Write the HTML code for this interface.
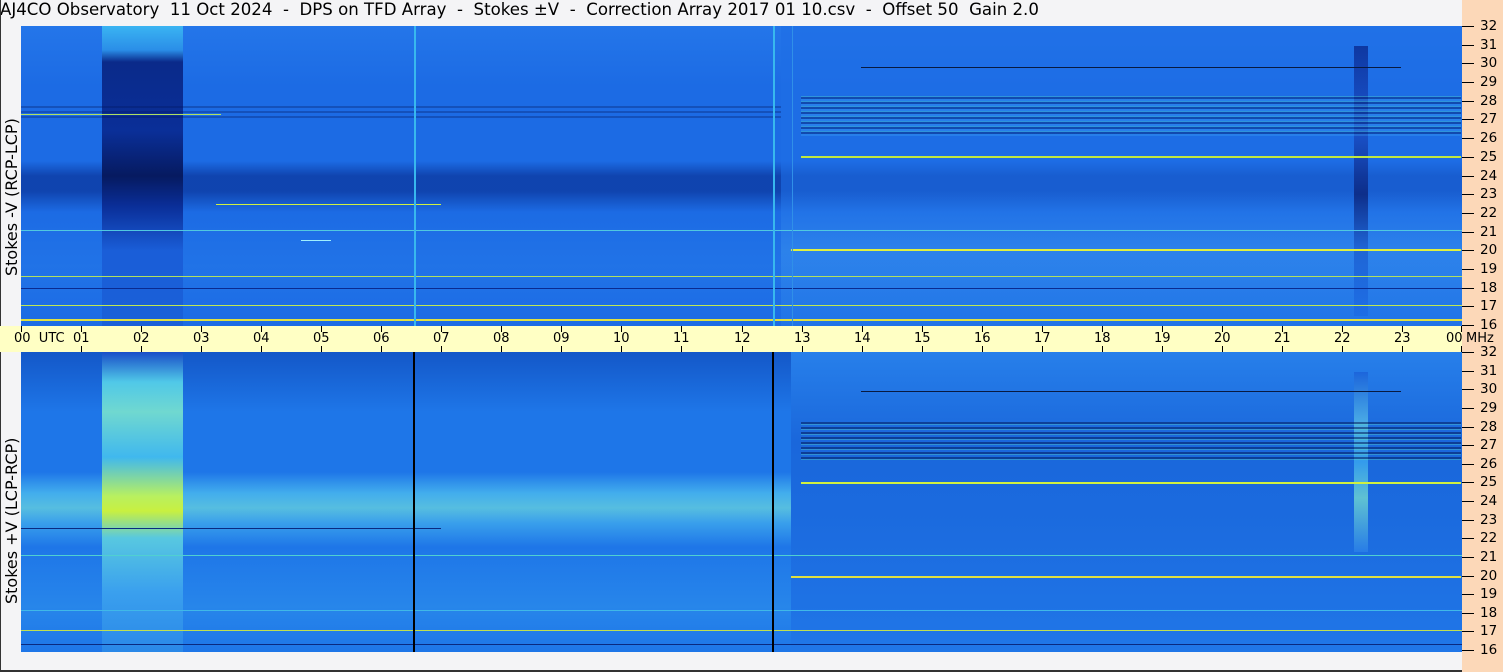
<!DOCTYPE html>
<html><head><meta charset="utf-8"><style>
*{margin:0;padding:0;box-sizing:border-box}
body{width:1503px;height:672px;background:#f4f4f6;position:relative;overflow:hidden;font-family:"DejaVu Sans","Liberation Sans",sans-serif;color:#000}
.a{position:absolute}
#title{left:6px;top:4px;font-size:16.6px;white-space:pre}
.panel{position:absolute;left:21px;width:1441px;height:300px;overflow:hidden}
#top{top:26px;background:#1c6be4}
#bot{top:352px;background:#1e76e8}
#axis{left:0;top:326px;width:1462px;height:26px;background:#ffffc4}
#right{left:1462px;top:0;width:41px;height:672px;background:#fcd8b8}
.lab{position:absolute;font-size:13px}
.mhz{position:absolute;left:1480px;font-size:13.5px}
.tk{position:absolute;left:1462px;width:12px;height:1px;background:#000}
.vt{position:absolute;top:0;width:1px;background:#000}
.ylab{position:absolute;font-size:16px;transform:rotate(-90deg);transform-origin:left top;white-space:nowrap}
.ln{position:absolute;height:1px}
</style></head><body>
<div id="title">AJ4CO Observatory  11 Oct 2024  -  DPS on TFD Array  -  Stokes ±V  -  Correction Array 2017 01 10.csv  -  Offset 50  Gain 2.0</div>
<div class="a" style="left:0;top:0;width:1px;height:672px;background:#333"></div>
<div class="a" style="left:0;top:670px;width:1462px;height:2px;background:#333"></div>
<div id="right" class="a"></div>
<div class="ylab" style="left:2px;top:276px">Stokes -V (RCP-LCP)</div>
<div class="ylab" style="left:2px;top:604px">Stokes +V (LCP-RCP)</div>

<div id="top" class="panel">
 <div class="a" style="left:0;top:0;width:1441px;height:300px;background:linear-gradient(180deg,rgba(60,150,250,.25) 0,rgba(0,0,0,0) 20%,rgba(0,0,0,0) 45%,rgba(0,20,110,.45) 50%,rgba(0,20,110,.45) 55%,rgba(0,0,0,0) 62%,rgba(60,160,250,.15) 80%,rgba(0,0,0,0) 100%)"></div>
 <div class="a" style="left:760px;top:0;width:681px;height:300px;background:linear-gradient(180deg,rgba(30,110,230,.6) 0,rgba(30,110,230,.6) 55%,rgba(60,150,240,.45) 75%,rgba(40,130,235,.35) 100%)"></div>
 <div class="a" style="left:81px;top:0;width:81px;height:300px;background:linear-gradient(180deg,#3ab4f2 0,#2a8ee8 8%,#0a2a8a 12%,#0a2f98 35%,#061a60 50%,#0a2e98 60%,#1a5ed8 75%,#1a60d8 100%)"></div>
 <div class="a" style="left:1333px;top:20px;width:14px;height:270px;background:linear-gradient(180deg,#0a2a90 0,#1a4ec8 30%,#0a2278 55%,#1c5ed0 75%,#1c6be4 100%);opacity:.8"></div>
 <div class="a" style="left:780px;top:70px;width:660px;height:40px;background:repeating-linear-gradient(180deg,rgba(80,220,200,.35) 0 1px,rgba(0,20,90,.4) 1px 3px,rgba(80,200,255,.2) 3px 5px)"></div>
 <div class="a" style="left:0;top:80px;width:760px;height:14px;background:repeating-linear-gradient(180deg,rgba(0,20,90,.3) 0 2px,rgba(0,0,0,0) 2px 5px)"></div>
 <div class="ln" style="left:840px;top:41px;width:540px;background:#081a40"></div>
 <div class="ln" style="left:780px;top:130px;width:660px;background:#c0e840;height:2px"></div>
 <div class="ln" style="left:0;top:88px;width:200px;background:#b0e060"></div>
 <div class="ln" style="left:195px;top:178px;width:225px;background:#d0f040"></div>
 <div class="ln" style="left:0;top:204px;width:1441px;background:#50c8e0"></div>
 <div class="ln" style="left:770px;top:223px;width:670px;background:#e0f040;height:2px"></div>
 <div class="ln" style="left:0;top:250px;width:1441px;background:#b0e060"></div>
 <div class="ln" style="left:0;top:262px;width:1441px;background:#0a2a90"></div>
 <div class="ln" style="left:0;top:279px;width:1441px;background:#c0e850"></div>
 <div class="ln" style="left:0;top:293px;width:1441px;background:#e0e040;height:2px"></div>
 <div class="ln" style="left:280px;top:214px;width:30px;background:#a0f0ff"></div>
 <div class="a" style="left:393px;top:0;width:2px;height:300px;background:#38b8ee"></div>
 <div class="a" style="left:752px;top:0;width:2px;height:300px;background:#38b8ee"></div>
 <div class="a" style="left:771px;top:0;width:1px;height:300px;background:#3090e8"></div>
</div>

<div id="axis" class="a"></div>
<div class="lab" style="left:14px;top:331px">00&nbsp;&nbsp;UTC</div>
<div class="lab" style="left:1446px;top:331px">00</div><div class="lab" style="left:1466px;top:331px">MHz</div>

<div id="bot" class="panel">
 <div class="a" style="left:0;top:0;width:770px;height:300px;background:linear-gradient(180deg,rgba(0,30,140,.35) 0,rgba(0,0,0,0) 20%,rgba(0,0,0,0) 40%,rgba(90,210,240,.6) 47%,rgba(110,220,220,.7) 52%,rgba(90,210,240,.45) 57%,rgba(0,0,0,0) 65%,rgba(60,170,240,.3) 85%,rgba(0,0,0,0) 100%)"></div>
 <div class="a" style="left:770px;top:0;width:671px;height:300px;background:linear-gradient(180deg,rgba(60,150,240,.3) 0,rgba(20,80,200,.4) 30%,rgba(20,80,200,.3) 55%,rgba(40,120,230,.2) 100%)"></div>
 <div class="a" style="left:81px;top:0;width:81px;height:300px;background:linear-gradient(180deg,#1a4ec8 0,#50c8e8 10%,#70d8d0 20%,#40b8ee 35%,#b8f060 48%,#c8f040 53%,#58c8e0 62%,#3aa0ee 80%,#2a88e8 100%)"></div>
 <div class="a" style="left:1333px;top:20px;width:14px;height:180px;background:linear-gradient(180deg,#1a60d8,#58c0e8 30%,#3aa8f0 50%,#70d8d0 70%,#2a80e8);opacity:.8"></div>
 <div class="a" style="left:780px;top:70px;width:660px;height:40px;background:repeating-linear-gradient(180deg,rgba(0,20,80,.5) 0 2px,rgba(90,220,190,.35) 2px 3px,rgba(0,0,0,0) 3px 5px)"></div>
 <div class="ln" style="left:840px;top:39px;width:540px;background:#081a40"></div>
 <div class="ln" style="left:780px;top:130px;width:660px;background:#d0f040;height:2px"></div>
 <div class="ln" style="left:0;top:176px;width:420px;background:#0a2a80"></div>
 <div class="ln" style="left:0;top:203px;width:1441px;background:#50d0d0"></div>
 <div class="ln" style="left:770px;top:224px;width:670px;background:#e0e040;height:2px"></div>
 <div class="ln" style="left:0;top:258px;width:1441px;background:#40b8e8"></div>
 <div class="ln" style="left:0;top:278px;width:1441px;background:#c0e050"></div>
 <div class="ln" style="left:0;top:292px;width:1441px;background:#0a2a80"></div>
 <div class="a" style="left:392px;top:0;width:2px;height:300px;background:#000"></div>
 <div class="a" style="left:751px;top:0;width:2px;height:300px;background:#000"></div>
</div>

<div id="ticks"></div>
<script>
var h='';
for(var i=1;i<24;i++){var x=Math.round(21+i*1441/24);var s=(i<10?'0':'')+i;
h+='<div class="vt" style="left:'+x+'px;top:326px;height:6px"></div><div class="vt" style="left:'+x+'px;top:346px;height:6px"></div>';
h+='<div class="lab" style="left:'+(x-8)+'px;top:331px">'+s+'</div>';}
h+='<div class="vt" style="left:21px;top:326px;height:6px"></div><div class="vt" style="left:1461px;top:326px;height:6px"></div><div class="vt" style="left:1461px;top:346px;height:6px"></div>';
for(var p=0;p<2;p++){var y0=p?352:26;var y1=p?650:325;
for(var m=32;m>=16;m--){var y=Math.round(y1-(m-16)*(y1-y0)/16);if(m==32)y=y0;
h+='<div class="tk" style="top:'+y+'px"></div><div class="mhz" style="top:'+(y-8)+'px">'+m+'</div>';}}
document.getElementById('ticks').innerHTML=h;
</script>
</body></html>
